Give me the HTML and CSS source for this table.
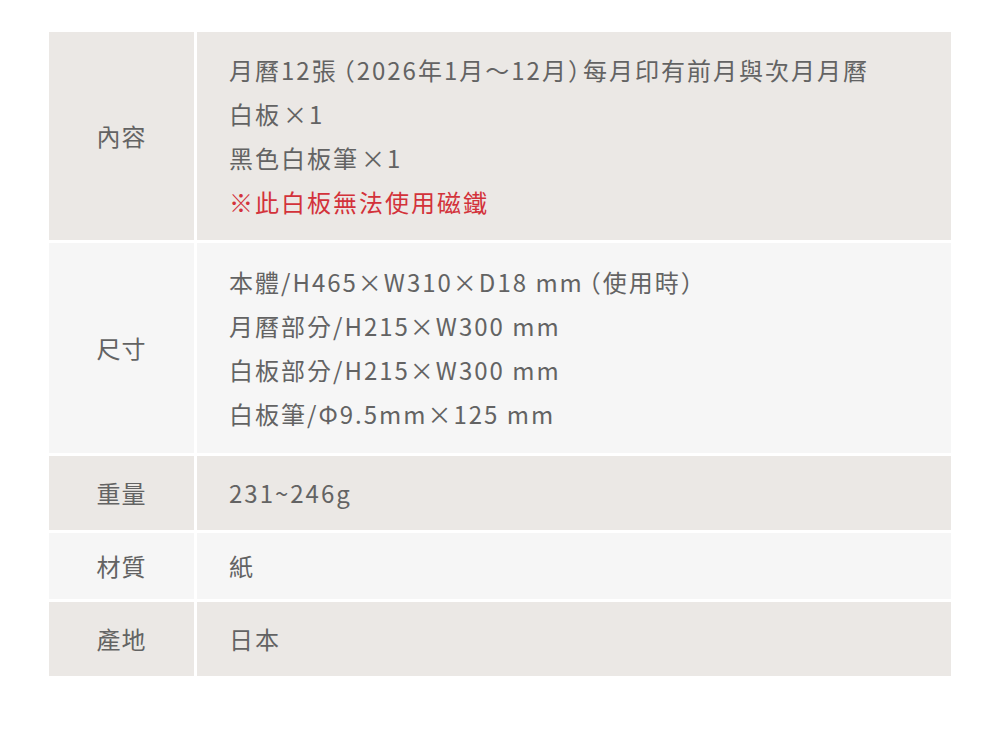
FILE: index.html
```html
<!DOCTYPE html>
<html lang="zh-Hant">
<head>
<meta charset="utf-8">
<link rel="stylesheet" href="styles.css">
</head>
<body>
<div class="spec">
  <div class="label dark r1">內容</div>
  <div class="value dark r1">
    <div>月曆12張<span class="po">（</span>2026年1月～12月<span class="pc">）</span>每月印有前月與次月月曆</div>
    <div>白板<span class="x">×</span>1</div>
    <div>黑色白板筆<span class="x">×</span>1</div>
    <div class="red">※此白板無法使用磁鐵</div>
  </div>
  <div class="label light r2">尺寸</div>
  <div class="value light r2">
    <div>本體/H465×W310×D18 mm<span class="po">（</span>使用時<span class="pc">）</span></div>
    <div>月曆部分/H215×W300 mm</div>
    <div>白板部分/H215×W300 mm</div>
    <div>白板筆/Φ9.5mm×125 mm</div>
  </div>
  <div class="label dark r3">重量</div>
  <div class="value dark r3"><div>231~246g</div></div>
  <div class="label light r4">材質</div>
  <div class="value light r4"><div>紙</div></div>
  <div class="label dark r5">產地</div>
  <div class="value dark r5"><div>日本</div></div>
</div>
</body>
</html>
```
FILE: styles.css
```css
html, body {
  margin: 0;
  padding: 0;
  background: #ffffff;
}
body {
  font-family: "Noto Sans CJK TC", "Noto Sans", sans-serif;
  color: #636363;
  font-size: 24px;
  letter-spacing: 2px;
}
.spec {
  display: grid;
  grid-template-columns: 145px 754px;
  column-gap: 3px;
  row-gap: 3px;
  width: 902px;
  margin: 32px 0 0 49px;
}
.dark { background: #ebe8e5; }
.light { background: #f6f6f6; }
.label {
  display: flex;
  align-items: center;
  justify-content: center;
  line-height: 44px;
  letter-spacing: 1px;
}
.value {
  padding-left: 32px;
  line-height: 44px;
  display: flex;
  flex-direction: column;
  justify-content: center;
  white-space: nowrap;
}
.r1 { height: 208px; }
.r2 { height: 210px; }
.r3 { height: 74px; }
.r4 { height: 66px; }
.r5 { height: 74px; }
.red { color: #d3323a; }
.x { margin-left: 2px; }
.po { font-feature-settings: "halt"; padding-left: 5px; }
.pc { font-feature-settings: "halt"; padding-right: 1px; }
```
